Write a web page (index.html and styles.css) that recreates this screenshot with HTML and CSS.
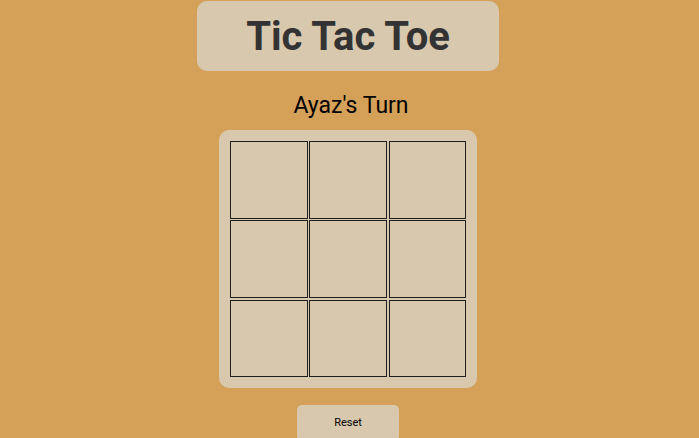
FILE: index.html
```html
<!DOCTYPE html>
<html>
<head>
<meta charset="utf-8">
<link rel="stylesheet" href="styles.css">
</head>
<body>
<div class="page">
  <h1 class="title">Tic Tac Toe</h1>
  <div class="turn">Ayaz's Turn</div>
  <div class="board">
    <div class="cell"></div><div class="cell"></div><div class="cell"></div>
    <div class="cell"></div><div class="cell"></div><div class="cell"></div>
    <div class="cell"></div><div class="cell"></div><div class="cell"></div>
  </div>
  <button class="reset">Reset</button>
</div>
</body>
</html>
```
FILE: styles.css
```css
html, body {
  margin: 0;
  padding: 0;
  background: #d5a159;
  font-family: Roboto, "Liberation Sans", sans-serif;
  overflow: hidden;
}
.page {
  display: flex;
  flex-direction: column;
  align-items: center;
  padding-top: 1px;
  padding-right: 3px;
}
.title {
  margin: 0;
  width: 302px;
  height: 70px;
  box-sizing: border-box;
  display: flex;
  align-items: center;
  justify-content: center;
  background: #d8c8ae;
  border-radius: 10px;
  font-size: 40px;
  font-weight: 700;
  color: #333333;
}
.turn {
  margin-top: 22px;
  margin-left: 6px;
  font-size: 23px;
  line-height: 26px;
  color: #000;
}
.board {
  margin-top: 11px;
  width: 258px;
  height: 258px;
  box-sizing: border-box;
  padding: 11px;
  background: #d8c8ae;
  border-radius: 10px;
  display: grid;
  grid-template-columns: repeat(3, 77.5px);
  grid-template-rows: repeat(3, 77.5px);
  gap: 1.75px;
}
.cell {
  border: 1.6px solid #1e1e1e;
  box-sizing: border-box;
}
.reset {
  margin-top: 17px;
  width: 102px;
  height: 36px;
  border: none;
  border-radius: 5px;
  background: #d8c8ae;
  font-family: Roboto, "Liberation Sans", sans-serif;
  font-size: 11px;
  color: #000;
  padding: 0 0 2px 0;
}
```
